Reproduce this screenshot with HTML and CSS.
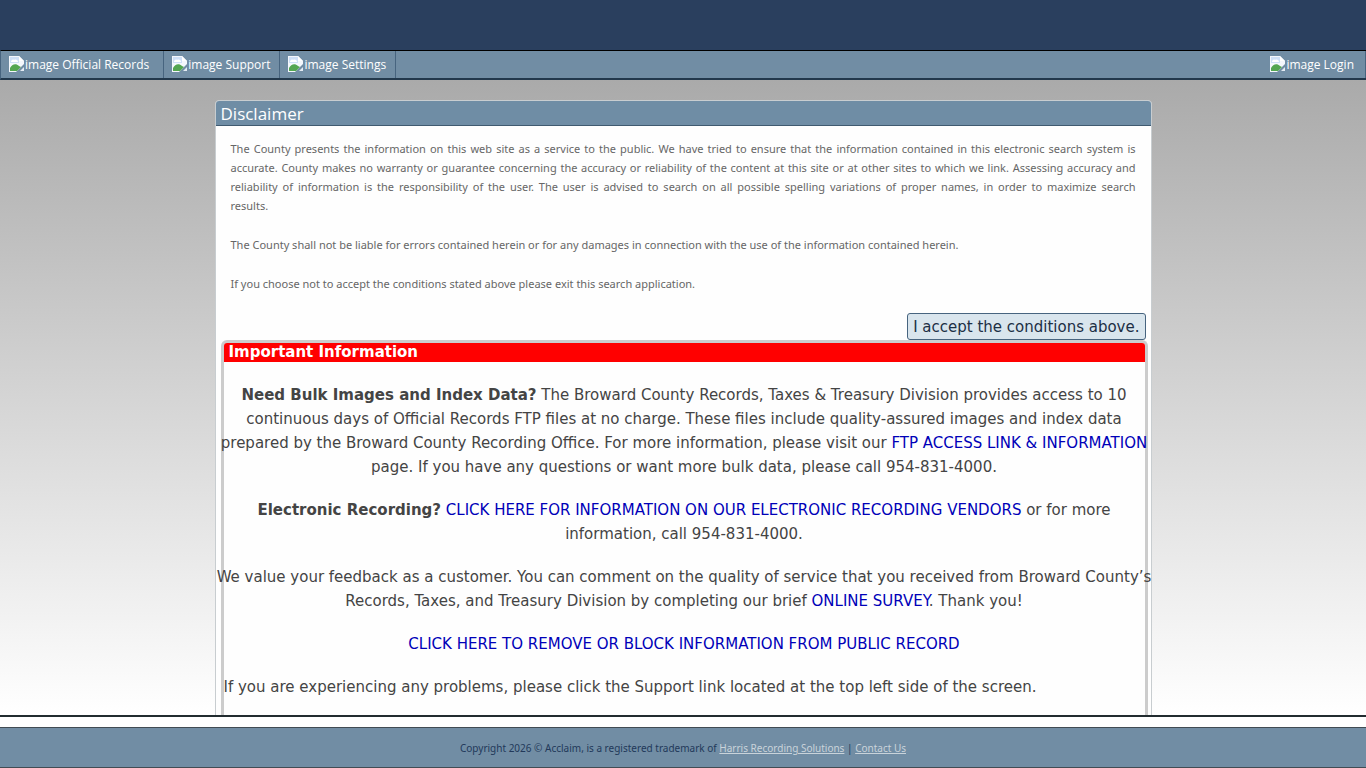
FILE: index.html
```
<!DOCTYPE html>
<html lang="en">
<head>
    <meta charset="UTF-8">
    <meta name="viewport" content="width=device-width, initial-scale=1.0">
    <title>Disclaimer</title>
    <link rel="stylesheet" href="styles.css">
</head>
<body>
    <svg width="0" height="0" class="defs" aria-hidden="true">
        <symbol id="broken" viewBox="0 0 16 16">
            <path d="M0 0h10l5 5v3l-8 8H0z" fill="#f4f7fc"/>
            <path d="M1 1h9v6H1z" fill="#cfe0f7"/>
            <path d="M2 6c0-2 2-3 3-2 2-1 4 0 4 2z" fill="#fff"/>
            <path d="M1 15v-3c2-4 6-5 9-2l2 1-4 4z" fill="#54a651"/>
            <path d="M10 0v5h5z" fill="#fff"/>
            <path d="M15 11v4h-4z" fill="#e4ebf3"/>
        </symbol>
    </svg>

    <header class="banner"></header>

    <nav class="menu">
        <a href="#" class="menu-item wide"><svg class="icon"><use href="#broken"/></svg>image Official Records</a>
        <a href="#" class="menu-item"><svg class="icon"><use href="#broken"/></svg>image Support</a>
        <a href="#" class="menu-item"><svg class="icon"><use href="#broken"/></svg>image Settings</a>
        <a href="#" class="menu-item login"><svg class="icon"><use href="#broken"/></svg>image Login</a>
    </nav>

    <main class="content">
        <section class="panel">
            <h1 class="panel-title">Disclaimer</h1>
            <div class="disclaimer">
                <p><span class="full-line">The County presents the information on this web site as a service to the public. We have tried to ensure that the information contained in this electronic search system is accurate. County makes no warranty or guarantee concerning the accuracy or reliability of the content at this site or at other sites to which we link. Assessing accuracy and reliability of information is the responsibility of the user. The user is advised to search on all possible spelling variations of proper names, in order to maximize search</span> results.</p>
                <p>The County shall not be liable for errors contained herein or for any damages in connection with the use of the information contained herein.</p>
                <p>If you choose not to accept the conditions stated above please exit this search application.</p>
            </div>
            <div class="actions">
                <button type="button" class="accept">I accept the conditions above.</button>
            </div>
            <div class="notice">
                <h2 class="notice-title">Important Information</h2>
                <div class="notice-body">
                    <p><strong>Need Bulk Images and Index Data?</strong> The Broward County Records, Taxes &amp; Treasury Division provides access to 10 continuous days of Official Records FTP files at no charge. These files include quality-assured images and index data prepared by the Broward County Recording Office. For more information, please visit our <a href="#">FTP ACCESS LINK &amp; INFORMATION</a> page. If you have any questions or want more bulk data, please call 954-831-4000.</p>
                    <p><strong>Electronic Recording?</strong> <a href="#">CLICK HERE FOR INFORMATION ON OUR ELECTRONIC RECORDING VENDORS</a> or for more information, call 954-831-4000.</p>
                    <p>We value your feedback as a customer. You can comment on the quality of service that you received from Broward County’s Records, Taxes, and Treasury Division by completing our brief <a href="#">ONLINE SURVEY</a>. Thank you!</p>
                    <p><a href="#">CLICK HERE TO REMOVE OR BLOCK INFORMATION FROM PUBLIC RECORD</a></p>
                    <p class="left">If you are experiencing any problems, please click the Support link located at the top left side of the screen.</p>
                </div>
            </div>
        </section>
    </main>

    <footer class="footer">
        <p>Copyright 2026 © Acclaim, is a registered trademark of <a href="#">Harris Recording Solutions</a> | <a href="#">Contact Us</a></p>
    </footer>
</body>
</html>
```
FILE: styles.css
```
* {
    box-sizing: border-box;
}

body {
    margin: 0;
    height: 100vh;
    display: flex;
    flex-direction: column;
    overflow: hidden;
    background: #fff;
    color: #444;
    font-family: "Noto Sans", "Open Sans", sans-serif;
    font-size: 11px;
}

h1, h2, p {
    margin: 0;
}

.defs {
    position: absolute;
}

.banner {
    flex: none;
    height: 50px;
    background: #2a3f5e;
}

.menu {
    flex: none;
    display: flex;
    height: 30px;
    background: #718da4;
    border-top: 1px solid #000;
    border-left: 1px solid #47647f;
    border-bottom: 2px solid #22384c;
}

.menu-item {
    display: flex;
    align-items: center;
    padding: 0 9px 0 8px;
    border-right: 1px solid #47647f;
    color: #fff;
    font-size: 12px;
    font-family: "Open Sans", "Noto Sans", sans-serif;
    text-decoration: none;
}

.menu-item.wide {
    padding-right: 14px;
}

.menu-item.login {
    margin-left: auto;
    padding-right: 11px;
}

.icon {
    width: 16px;
    height: 16px;
    margin-bottom: 2px;
}

.content {
    flex: 1;
    min-height: 0;
    padding: 20px 20px 0;
    overflow: hidden;
    background: linear-gradient(#aaa, #fff);
    border-bottom: 2px solid #222c30;
}

.panel {
    max-width: 937px;
    min-height: 100%;
    margin: 0 auto;
    background: #fefefe;
    border: 1px solid #c8cdd0;
    border-radius: 4px 4px 0 0;
}

.panel-title {
    height: 25px;
    padding-left: 5px;
    background: #6f8da5;
    border-bottom: 1px solid #405a70;
    border-radius: 3px 3px 0 0;
    color: #fff;
    font-family: "Open Sans", "Noto Sans", sans-serif;
    font-size: 17px;
    font-weight: 400;
    line-height: 25px;
}

.disclaimer {
    padding: 13px 15px 20px;
    color: #666;
    line-height: 19px;
    text-align: justify;
}

.disclaimer p + p {
    margin-top: 20px;
}

.full-line {
    display: block;
    text-align-last: justify;
}

.actions {
    display: flex;
    justify-content: flex-end;
    padding: 0 5px;
}

.accept {
    height: 27px;
    padding: 0 5px;
    background: #d9e5ed;
    border: 1px solid #47647f;
    border-radius: 3px;
    color: #1c2f45;
    font-family: "DejaVu Sans", Verdana, sans-serif;
    font-size: 15px;
}

.notice {
    margin: 0 3px 0 5px;
    border: 3px solid #ccc;
    border-bottom: 0;
    border-radius: 6px 6px 0 0;
    font-family: "DejaVu Sans", Verdana, sans-serif;
    font-size: 15px;
}

.notice-title {
    padding-left: 5px;
    background: #f00;
    border-radius: 3px 3px 0 0;
    color: #fff;
    font-size: 15px;
    line-height: 19px;
}

.notice-body {
    margin: 0 -10px;
    padding: 21px 0;
    line-height: 24px;
    text-align: center;
}

.notice-body p + p {
    margin-top: 19px;
}

.notice-body .left {
    padding-left: 10px;
    text-align: left;
}

.notice-body a {
    color: #0000b8;
    text-decoration: none;
}

.footer {
    flex: none;
    height: 41px;
    margin-top: 10px;
    background: #718da4;
    border-top: 1px solid #414c54;
    border-bottom: 1px solid #414c54;
    color: #22395a;
    font-size: 10px;
    line-height: 40px;
    text-align: center;
}

.footer a {
    color: #c9d3da;
}
```
